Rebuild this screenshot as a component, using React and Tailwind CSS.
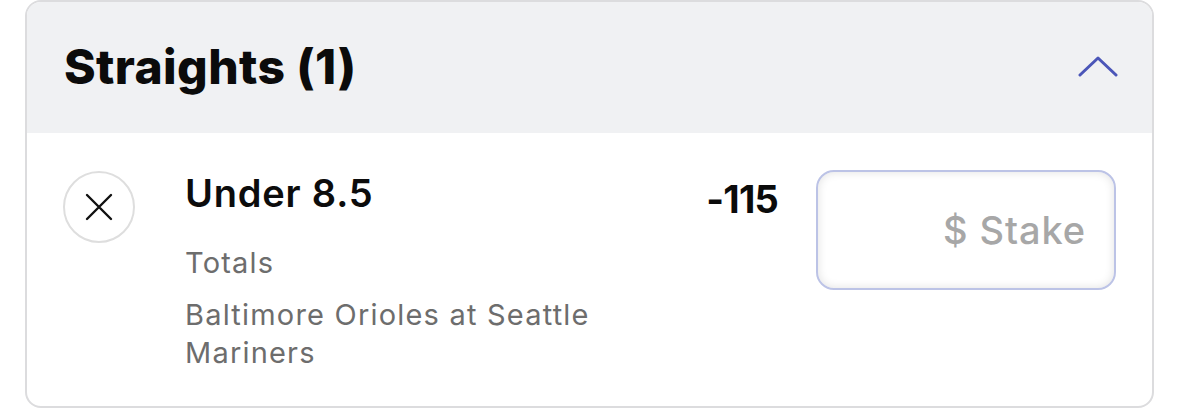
function ChevronUp() {
  return (
    <svg width="40" height="22" viewBox="0 0 40 22" fill="none" className="shrink-0 -mt-[2px]">
      <path d="M2 19 L20 2 L38 19" stroke="#4b56b8" strokeWidth="3" strokeLinecap="round" strokeLinejoin="round" />
    </svg>
  );
}

function CloseIcon() {
  return (
    <svg width="28" height="28" viewBox="0 0 28 28" fill="none">
      <path d="M2 2 L26 26 M26 2 L2 26" stroke="#111" strokeWidth="2.4" strokeLinecap="round" />
    </svg>
  );
}

export default function App() {
  return (
    <div className="w-[1179px] h-[409px] bg-white font-['Inter',sans-serif] overflow-hidden">
      <div className="mx-[25px] h-[408px] rounded-[16px] border-2 border-[#dcdcde] overflow-hidden bg-white">
        {/* Header */}
        <div className="h-[131px] bg-[#f0f1f3] flex items-center justify-between pl-[37px] pr-[34px]">
          <h2 className="font-extrabold text-[48px] leading-none text-[#0b0b0b] tracking-[0.4px] -mt-[2px]">
            Straights (1)
          </h2>
          <ChevronUp />
        </div>

        {/* Selection row */}
        <div className="flex items-start pl-[36px] pr-[36px] pt-[37px]">
          <div className="mt-[1px] w-[72px] h-[72px] rounded-full border-2 border-[#dedede] flex items-center justify-center shrink-0">
            <CloseIcon />
          </div>

          <div className="ml-[50px] w-[480px] shrink-0">
            <div className="text-[38px] font-semibold leading-[46px] text-[#0c0c0c] tracking-[0.8px]">Under 8.5</div>
            <div className="mt-[28px] text-[29px] leading-[38px] text-[#6d6d6d] tracking-[1.2px]">Totals</div>
            <div className="mt-[14px] text-[29px] leading-[38px] text-[#6d6d6d] tracking-[1.2px]">
              Baltimore Orioles at Seattle Mariners
            </div>
          </div>

          <div className="ml-auto flex items-start gap-[38px]">
            <div className="pt-[6px] text-[38px] font-bold leading-[46px] text-[#0b0b0b] tracking-[-0.8px]">-115</div>
            <div className="w-[300px] h-[120px] rounded-[18px] border-2 border-[#bcc3e6] bg-white shadow-[inset_0_0_10px_rgba(0,0,0,0.12)] flex items-center justify-end pr-[28px]">
              <span className="text-[38px] font-medium text-[#a7a7a7] tracking-[0.9px]">$ Stake</span>
            </div>
          </div>
        </div>
      </div>
    </div>
  );
}
